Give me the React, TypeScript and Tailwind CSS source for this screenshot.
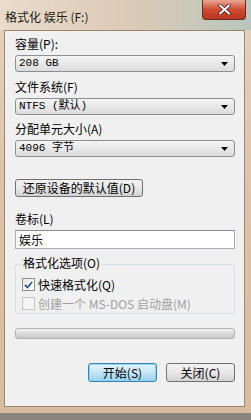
import React from 'react';

const cjk = "font-['Noto_Sans_CJK_SC','Liberation_Sans',sans-serif]";
const mono = "font-['Liberation_Mono','Noto_Sans_CJK_SC',monospace]";

function Combo({ value }: { value: string }) {
  return (
    <div className="h-[17px] w-[220px] rounded-[3px] border border-[#8e8f8f] bg-gradient-to-b from-[#f4f4f4] to-[#dcdcdc] flex items-center pl-[3px] pr-[6px]">
      <span className={`${mono} text-[11px] leading-none text-black flex-1`}>{value}</span>
      <svg width="7" height="4" viewBox="0 0 7 4">
        <path d="M0 0 H7 L3.5 4 Z" fill="#000" />
      </svg>
    </div>
  );
}

function Label({ children, className = '' }: { children: React.ReactNode; className?: string }) {
  return <div className={`text-[12px] leading-[14px] text-black ${className}`}>{children}</div>;
}

export default function App() {
  return (
    <div className={`w-[251px] h-[420px] bg-[#8a8580] ${cjk} overflow-hidden`}>
      <div className="h-[413px] bg-gradient-to-b from-[#e6d2bd] via-[#dcc2a8] to-[#d8bc9f] pl-[4px] pr-[6px] pb-[6px] flex flex-col">
        {/* title bar */}
        <div className="h-[30px] flex items-start relative bg-gradient-to-r from-[#eadbcb] via-[#dccab6] to-[#b9c6bd] -ml-[4px] -mr-[6px] pl-[5px]">
          <span className="text-[12px] leading-none text-[#1a1a1a] mt-[11px]">格式化 娱乐 (F:)</span>
          <div className="absolute left-[202px] top-0 w-[44px] h-[20px] rounded-b-[4px] border border-t-0 border-[#6b2a20] bg-gradient-to-b from-[#e9a694] via-[#cf4b33] to-[#b8341f] flex items-center justify-center">
            <svg width="13" height="11" viewBox="0 0 13 11">
              <path d="M2 1.5 L11 9.5 M11 1.5 L2 9.5" stroke="#3a1410" strokeWidth="3.6" strokeLinecap="round" />
              <path d="M2 1.5 L11 9.5 M11 1.5 L2 9.5" stroke="#fff" strokeWidth="2.2" strokeLinecap="round" />
            </svg>
          </div>
        </div>

        {/* client */}
        <div className="flex-1 bg-[#f0f0f0] border border-[#9c8670] flex flex-col pl-[10px] pt-[6px]">
          <Label>容量(P):</Label>
          <div className="mt-[4px]"><Combo value="208 GB" /></div>

          <Label className="mt-[8px]">文件系统(F)</Label>
          <div className="mt-[4px]"><Combo value="NTFS (默认)" /></div>

          <Label className="mt-[7px]">分配单元大小(A)</Label>
          <div className="mt-[4px]"><Combo value="4096 字节" /></div>

          <button className="mt-[22px] w-[128px] h-[18px] rounded-[3px] border border-[#707070] bg-gradient-to-b from-[#f2f2f2] via-[#e8e8e8] to-[#d2d2d2] text-[12px] leading-none text-black flex items-center justify-center">
            还原设备的默认值(D)
          </button>

          <Label className="mt-[15px]">卷标(L)</Label>
          <div className="mt-[4px] w-[220px] h-[19px] border border-[#abadb3] border-t-[#8a8c93] bg-white flex items-center pl-[3px] text-[12px] leading-none text-black">
            娱乐
          </div>

          <div className="mt-[8px] w-[220px] relative">
            <div className="absolute left-[6px] -top-[1px] px-[2px] bg-[#f0f0f0] text-[12px] leading-[14px] text-black">格式化选项(O)</div>
            <div className="mt-[7px] h-[50px] border border-[#d5dfe5] rounded-[2px] flex flex-col pl-[6px] pt-[13px] gap-[6px]">
              <div className="flex items-center gap-[3px]">
                <div className="w-[13px] h-[13px] border border-[#8f8f8f] bg-gradient-to-br from-[#e6e6e6] to-white flex items-center justify-center">
                  <svg width="9" height="8" viewBox="0 0 9 8">
                    <path d="M1 4 L3.5 6.5 L8 1" stroke="#2a5a9a" strokeWidth="1.8" fill="none" />
                  </svg>
                </div>
                <span className="text-[12px] leading-none text-black">快速格式化(Q)</span>
              </div>
              <div className="flex items-center gap-[3px]">
                <div className="w-[13px] h-[13px] border border-[#c4c4c4] bg-[#f4f4f4]" />
                <span className="text-[12px] leading-none text-[#a0a0a0]">创建一个 MS-DOS 启动盘(M)</span>
              </div>
            </div>
          </div>

          <div className="mt-[14px] w-[220px] h-[11px] rounded-[3px] border border-[#b2b2b2] bg-gradient-to-b from-[#f3f3f3] via-[#dadada] to-[#c9c9c9]" />

          <div className="mt-[24px] w-[220px] flex justify-end gap-[9px]">
            <button className="w-[69px] h-[19px] rounded-[3px] border border-[#3c7fb1] bg-gradient-to-b from-[#e5f4fc] via-[#c4e5f6] to-[#98d1ef] shadow-[inset_0_0_0_1px_#8ed3f9] text-[12px] leading-none text-black">
              开始(S)
            </button>
            <button className="w-[69px] h-[19px] rounded-[3px] border border-[#707070] bg-gradient-to-b from-[#f2f2f2] via-[#e8e8e8] to-[#d2d2d2] text-[12px] leading-none text-black">
              关闭(C)
            </button>
          </div>
        </div>
      </div>
    </div>
  );
}
